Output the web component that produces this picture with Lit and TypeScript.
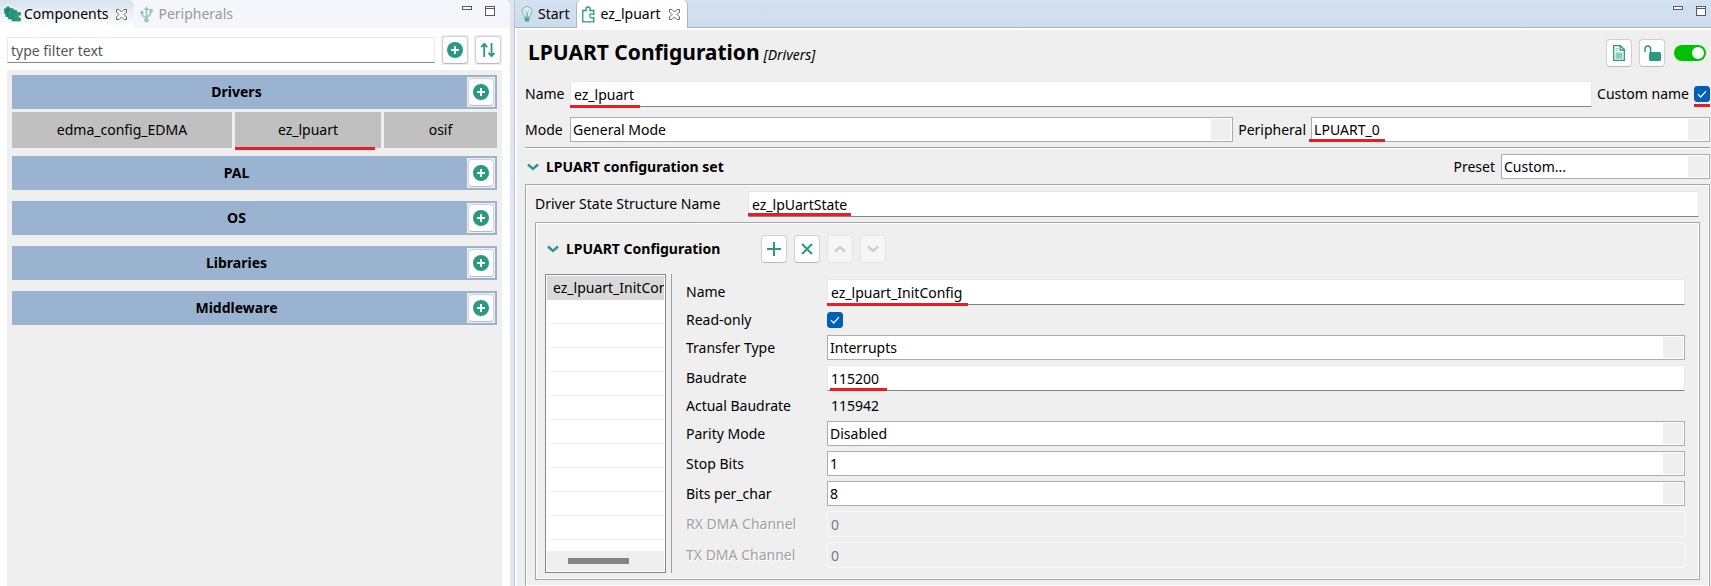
import { LitElement, html, css } from "lit";
import { customElement, state } from "lit/decorators.js";

const plusDisc = html`<svg width="16" height="16" viewBox="0 0 16 16"><circle cx="8" cy="8" r="8" fill="#2a9980"/><path d="M8 4V12M4 8H12" stroke="#fff" stroke-width="2"/></svg>`;
const sortArrows = html`<svg width="16" height="16" viewBox="0 0 16 16" fill="none" stroke="#2a9980" stroke-width="1.800"><path d="M4.200 15V2M1.200 5.200L4.200 1.800L7.200 5.200M11.500 1V14M8.500 10.800L11.500 14.200L14.500 10.800"/></svg>`;
const closeGlyph = html`<svg width="11" height="11" viewBox="0 0 11 11"><path d="M.5.5H3L5.500 3L8 .5H10.500V3L8 5.500L10.500 8V10.500H8L5.500 8L3 10.500H.5V8L3 5.500L.5 3Z" fill="#fff" stroke="#666" stroke-width="1"/></svg>`;
const minimise = html`<svg width="10" height="4" viewBox="0 0 10 4"><rect x=".5" y=".5" width="9" height="3" fill="#fff" stroke="#5a5a5a"/></svg>`;
const maximise = html`<svg width="10" height="10" viewBox="0 0 10 10"><rect x=".5" y=".5" width="9" height="9" fill="#fff" stroke="#5a5a5a"/><path d="M0 2.500H10" stroke="#5a5a5a"/></svg>`;
const componentsIcon = html`<svg width="17" height="16" viewBox="0 0 17 16"><path d="M0 2.500h2Q2 .5 4 .5T6 2.500h2V11H1.500V8.500Q0 8 .3 6.500Z" fill="#1f8a71"/><path d="M4 4.500h2Q6 2.500 8 2.500T10 4.500h2.500V13H4.500Z" fill="#2a9980" stroke="#1b7c66" stroke-width=".6"/><path d="M8 6.500h2Q10 4.800 11.500 4.800T13 6.500H16.500V9.200Q14.300 8.600 14.300 10.500T16.500 12V15H8Z" fill="#2a9980" stroke="#1b7c66" stroke-width=".6"/></svg>`;
const usbIcon = html`<svg width="13" height="17" viewBox="0 0 13 17" fill="none" stroke="#8fc9bb" stroke-width="1.500"><path d="M6.500 14V3M6.500 12Q2 10.500 2 7M6.500 11Q11 9.500 11 5"/><path d="M3.800 4L6.500 .5L9.200 4Z" fill="#8fc9bb" stroke="none"/><circle cx="6.500" cy="14.300" r="2.300" fill="#8fc9bb" stroke="none"/><circle cx="2" cy="6.500" r="1.700" fill="#8fc9bb" stroke="none"/><rect x="9.300" y="3" width="3.400" height="3.400" fill="#8fc9bb" stroke="none"/></svg>`;
const bulbIcon = html`<svg width="12" height="16" viewBox="0 0 12 16" fill="none" stroke="#6fb8ae"><path d="M3.500 11Q3.500 9.500 2 8.200A4.900 4.900 0 1 1 10 8.200Q8.500 9.500 8.500 11Z" fill="#dcefec"/><path d="M4 4.500L5.500 7V11M8 4.500L6.500 7V11" stroke-width=".8"/><path d="M3.500 12.500H8.500M4 14.500H8" stroke-width="2" stroke="#4aa394"/></svg>`;
const puzzleIcon = html`<svg width="13" height="17" viewBox="0 0 13 17" fill="none" stroke="#2a9980" stroke-width="1.300"><path d="M.8 4.500H4.300Q3.200 1 6 1T7.800 4.500H11.800V8.300Q7.800 6.800 7.800 9.800T11.800 11.600V15.800H.8Z"/></svg>`;
const fileIcon = html`<svg width="12" height="16" viewBox="0 0 12 16"><path d="M.7.700H7.500L11.300 4.500V15.300H.7Z" fill="#fff" stroke="#2a9980" stroke-width="1.300"/><path d="M7.200.7V5H11.300" fill="none" stroke="#2a9980" stroke-width="1.300"/><path d="M2.500 3.500H5.500M2.500 5.500H5.500" stroke="#8fc9bb" stroke-width="1.200"/><rect x="2.500" y="7.500" width="7" height="6.300" fill="#8fc9bb"/></svg>`;
const lockIcon = html`<svg width="17" height="17" viewBox="0 0 17 17"><rect x="5" y="7" width="12" height="9" rx="1.500" fill="#2a9980"/><path d="M1 7V4Q1 1 3.800 1T6.600 4V8" fill="none" stroke="#2a9980" stroke-width="1.500"/></svg>`;
const chevronDown = html`<svg width="12" height="8" viewBox="0 0 12 8"><path d="M1 1.500L6 6L11 1.500" fill="none" stroke="currentColor" stroke-width="2.400"/></svg>`;
const chevronUp = html`<svg width="12" height="8" viewBox="0 0 12 8"><path d="M1 6.500L6 2L11 6.500" fill="none" stroke="currentColor" stroke-width="2.400"/></svg>`;
const addIcon = html`<svg width="14" height="14" viewBox="0 0 14 14"><path d="M7 0V14M0 7H14" stroke="#2a9980" stroke-width="2"/></svg>`;
const removeIcon = html`<svg width="12" height="12" viewBox="0 0 12 12"><path d="M1 1L11 11M11 1L1 11" stroke="#2a9980" stroke-width="2"/></svg>`;
const tick = html`<svg class="tick" width="10" height="8" viewBox="0 0 10 8"><path d="M1 4.200L3.700 7L9 1.200" fill="none" stroke="#fff" stroke-width="1.200"/></svg>`;

interface Field {
  id: string;
  label: string;
  kind: "text" | "select" | "check" | "static" | "disabled";
  value?: string;
  mark?: string;
}

const FIELDS: Field[] = [
  { id: "cfg-name", label: "Name", kind: "text", value: "ez_lpuart_InitConfig", mark: "mark-wide" },
  { id: "cfg-ro", label: "Read-only", kind: "check" },
  { id: "cfg-transfer", label: "Transfer Type", kind: "select", value: "Interrupts" },
  { id: "cfg-baud", label: "Baudrate", kind: "text", value: "115200", mark: "mark-short" },
  { id: "cfg-actual", label: "Actual Baudrate", kind: "static", value: "115942" },
  { id: "cfg-parity", label: "Parity Mode", kind: "select", value: "Disabled" },
  { id: "cfg-stop", label: "Stop Bits", kind: "select", value: "1" },
  { id: "cfg-bits", label: "Bits per_char", kind: "select", value: "8" },
  { id: "cfg-rx", label: "RX DMA Channel", kind: "disabled", value: "0" },
  { id: "cfg-tx", label: "TX DMA Channel", kind: "disabled", value: "0" },
];

@customElement("app-root")
export class AppRoot extends LitElement {
  @state() private enabled = true;

  static styles = css`
    :host { display: block; height: 100vh; overflow: hidden; background: #dfe5f5; color: #000;
      font: 14px/20px "Noto Sans", "Open Sans", sans-serif; }
    * { box-sizing: border-box; }
    svg { display: block; flex: none; }
    button, input, select { font: inherit; color: inherit; margin: 0; }
    button { cursor: pointer; }
    h1, h2, h3, ul { margin: 0; padding: 0; font-size: inherit; list-style: none; }

    .shell { display: grid; grid-template-columns: 510px minmax(0, 1fr); gap: 4px; height: 100%; }
    .side { background: #fff; display: flex; flex-direction: column; border-top-right-radius: 6px; overflow: hidden; }
    .tabs { display: flex; height: 28px; flex: none; background: #f4f6fb; }
    .tab { display: flex; align-items: center; gap: 5px; border: 0; background: none; padding: 0 7px 0 6px; white-space: nowrap; }
    .side .tab { padding: 0 7px 0 4px; gap: 3px; }
    .side .tab.active { background: linear-gradient(#d6e3ef, #fff); border-top-right-radius: 6px; }
    .tab .close { margin-left: 5px; }
    .tab.dim { color: #999; }
    .side .tab.dim { gap: 5px; padding-left: 6px; }
    .winbtns { margin-left: auto; display: flex; gap: 13px; align-items: flex-start; padding: 6px 15px 0 0; }
    .winbtns button { border: 0; background: none; padding: 0; }

    .filter { display: flex; align-items: center; gap: 5px; padding: 7px 8px 5px 7px; }
    .filter .text { flex: 1; min-width: 0; margin-right: 1px; }
    .filter .text::placeholder { color: #555; opacity: 1; }
    .frame { background: #efefef; padding: 1px; flex: none; }
    .icon { width: 26px; height: 28px; display: grid; place-items: center; padding: 0; flex: none;
      background: #fdfdfd; border: 1px solid #d0d0d0; border-bottom-color: #b9b9b9; border-radius: 4px; }
    .icon:disabled { background: #f6f6f6; border-color: #e5e5e5; color: #ccc; }
    .tree { flex: 1; margin: 0 8px 0 7px; padding: 5px; background: #efefef; display: flex; flex-direction: column; gap: 11px; }
    .bar { height: 34px; display: flex; align-items: center; padding-right: 2px; background: #99b3d1; font-weight: 700; }
    .bar span { flex: 1; text-align: center; padding-right: 6px; }
    .items { display: grid; grid-template-columns: 220fr 146fr 113fr; gap: 3px; margin: 3px 0 -3px; }
    .items button { position: relative; height: 36px; border: 0; background: #c0c0c0; }

    .editor { display: flex; flex-direction: column; min-width: 0; background: #fff; border-left: 1px solid #c3c3c3; }
    .editor .tabs { background: linear-gradient(#d4e2f1, #cbdcec); border-bottom: 1px solid #a9b6cc; }
    .editor .tab.active { background: #fff; border: solid #a9b6cc; border-width: 0 1px; height: 28px; border-radius: 5px 5px 0 0; padding: 0 7px 0 5px; }
    .editor .tab.active .close { margin-left: 3px; }
    .editor .winbtns { padding-right: 5px; }
    .body { flex: 1; min-height: 0; margin: 2px 0 0 2px; padding: 9px 1px 0 8px; background: #efefef; }
    .title { display: flex; align-items: center; gap: 7px; height: 28px; padding: 0 4px 0 3px; }
    h1 { display: flex; align-items: baseline; gap: 4px; font-size: 21px; line-height: 28px; flex: none; }
    h1 small { font-size: 14px; font-weight: 400; font-style: italic; }
    .spacer { flex: 1; }
    .toggle { width: 32px; height: 16px; border-radius: 8px; border: 0; background: #00c000; padding: 2px; display: flex; justify-content: flex-end; margin-left: 2px; }
    .toggle::after { content: ""; width: 12px; height: 12px; border-radius: 50%; background: #fff; }
    .toggle.off { justify-content: flex-start; background: #999; }

    .row { display: flex; align-items: center; }
    .row > .lead { width: 45px; flex: none; }
    .row > .mid { padding: 0 5px; flex: none; }
    .row.name { margin-top: 14px; }
    .row.mode { margin-top: 10px; padding-bottom: 5px; border-bottom: 1px solid #a0a0a0; box-shadow: 0 1px #fff; }
    .grow { flex: 1; min-width: 0; }
    .g665 { flex: 665 1 0; min-width: 0; }
    .g400 { flex: 400 1 0; min-width: 0; }
    .field { position: relative; display: flex; }
    .text { width: 100%; height: 26px; padding: 0 3px; border: 1px solid #e8e8e8; border-bottom-color: #858585; background: #fff; border-radius: 1px; outline: 0; }
    .text:disabled { background: #efefef; border-color: #f8f8f8; color: #777; }
    .select { width: 100%; height: 25px; padding: 0 24px 0 2px; appearance: none; border: 1px solid #acacb0; border-radius: 0; outline: 0;
      background: linear-gradient(#efefef, #efefef) right 1px center / 20px 21px no-repeat #fff; }
    .check { position: relative; width: 16px; height: 16px; flex: none; display: block; }
    .check input { appearance: none; width: 16px; height: 16px; border-radius: 3px; border: 1px solid #888; background: #fff; display: block; }
    .check input:checked { background: #005fb8; border-color: #005fb8; }
    .tick { position: absolute; left: 3px; top: 4px; pointer-events: none; }

    .mark::after { content: ""; position: absolute; height: 3px; left: 0; bottom: -1px; width: 70px; background: #ed1c24; pointer-events: none; }
    .mark-item::after { width: 140px; bottom: -2px; }
    .mark-check::after { width: 16px; bottom: -5px; }
    .mark-periph::after { left: -2px; bottom: 0; width: 76px; }
    .mark-state::after { width: 103px; bottom: 1px; }
    .mark-wide::after { width: 141px; }
    .mark-short::after { left: 3px; width: 57px; bottom: 0; }

    .sec { display: flex; align-items: center; }
    .twist { display: flex; align-items: center; gap: 7px; border: 0; background: none; padding: 0 2px; font-weight: 700; }
    .twist svg { color: #2a9980; }
    .sec.outer { margin-top: 6px; justify-content: space-between; }
    .preset { display: flex; align-items: center; gap: 6px; }
    .preset .field { width: 209px; }
    .group { border: 1px solid #a6a6aa; box-shadow: inset 0 0 0 1px #fff; }
    .group.outer { margin-top: 5px; padding: 6px 9px; }
    .driver label { width: 213px; flex: none; }
    .driver .grow { margin-right: 1px; }
    .group.inner { margin-top: 5px; padding: 12px 14px 6px 9px; }
    .sec.inner { gap: 7px; margin-bottom: 11px; }
    .sec.inner .twist { width: 209px; }
    .split { display: grid; grid-template-columns: 121px 1px minmax(0, 1fr); }
    .split { column-gap: 5px; }
    .rule { background: #a0a0a0; }
    .list { border: 1px solid #828790; padding: 1px; background: #fff; display: flex; flex-direction: column; overflow: hidden; }
    .rows { flex: 1; overflow: hidden; background: repeating-linear-gradient(#fff 0 23px, #efefef 23px 24px); }
    .rows button { display: block; width: 100%; height: 24px; border: 0; padding: 0 0 0 6px; background: #d9d9d9; text-align: left; white-space: nowrap; overflow: hidden; }
    .scroll { height: 20px; padding: 7px 35px 7px 21px; background: #efefef; }
    .thumb { height: 6px; background: #858585; }
    .form { display: grid; grid-template-columns: 141px minmax(0, 1fr); row-gap: 5px; align-items: center; padding: 5px 0 5px 9px; }
    .form output { padding-left: 4px; }
    .form .off { color: #a0a0a0; text-shadow: 1px 1px #fff; }
    .form .check { margin: 2px 0; }
  `;

  private select(id: string, value: string) {
    return html`<select class="select" id=${id}><option>${value}</option></select>`;
  }

  private field(f: Field) {
    const label = html`<label for=${f.id} class=${f.kind === "disabled" ? "off" : ""}>${f.label}</label>`;
    switch (f.kind) {
      case "check":
        return html`${label}<span class="check"><input type="checkbox" id=${f.id} checked />${tick}</span>`;
      case "static":
        return html`${label}<output id=${f.id}>${f.value}</output>`;
      case "select":
        return html`${label}<div class="field">${this.select(f.id, f.value!)}</div>`;
      default:
        return html`${label}<div class="field ${f.mark ? `mark ${f.mark}` : ""}">
          <input class="text" id=${f.id} .value=${f.value ?? ""} ?disabled=${f.kind === "disabled"} /></div>`;
    }
  }

  private bar(name: string) {
    return html`<div class="bar"><span>${name}</span><div class="frame"><button class="icon" aria-label="Add to ${name}">${plusDisc}</button></div></div>`;
  }

  private windowButtons() {
    return html`<div class="winbtns"><button aria-label="Minimize">${minimise}</button><button aria-label="Maximize">${maximise}</button></div>`;
  }

  render() {
    return html`<div class="shell">
      <aside class="side">
        <div class="tabs">
          <button class="tab active">${componentsIcon}<span>Components</span><span class="close">${closeGlyph}</span></button>
          <button class="tab dim">${usbIcon}<span>Peripherals</span></button>
          ${this.windowButtons()}
        </div>
        <div class="filter">
          <input class="text" aria-label="Filter" placeholder="type filter text" />
          <div class="frame"><button class="icon" aria-label="Add component">${plusDisc}</button></div>
          <div class="frame"><button class="icon" aria-label="Sort">${sortArrows}</button></div>
        </div>
        <div class="tree">
          <div>
            ${this.bar("Drivers")}
            <div class="items">
              <button>edma_config_EDMA</button>
              <button class="mark mark-item">ez_lpuart</button>
              <button>osif</button>
            </div>
          </div>
          ${["PAL", "OS", "Libraries", "Middleware"].map((n) => this.bar(n))}
        </div>
      </aside>
      <main class="editor">
        <div class="tabs">
          <button class="tab">${bulbIcon}<span>Start</span></button>
          <button class="tab active">${puzzleIcon}<span>ez_lpuart</span><span class="close">${closeGlyph}</span></button>
          ${this.windowButtons()}
        </div>
        <div class="body">
          <div class="title">
            <h1>LPUART Configuration <small>[Drivers]</small></h1>
            <span class="spacer"></span>
            <button class="icon" aria-label="Documentation">${fileIcon}</button>
            <button class="icon" aria-label="Unlock">${lockIcon}</button>
            <button class="toggle ${this.enabled ? "" : "off"}" role="switch" aria-label="Enabled" aria-checked=${this.enabled}
              @click=${() => (this.enabled = !this.enabled)}></button>
          </div>
          <div class="row name">
            <label class="lead" for="name">Name</label>
            <div class="field grow mark"><input class="text" id="name" value="ez_lpuart" /></div>
            <label class="mid" for="custom">Custom name</label>
            <span class="check mark mark-check"><input type="checkbox" id="custom" checked />${tick}</span>
          </div>
          <div class="row mode">
            <label class="lead" for="mode">Mode</label>
            <div class="field g665">${this.select("mode", "General Mode")}</div>
            <label class="mid" for="peripheral">Peripheral</label>
            <div class="field g400 mark mark-periph">${this.select("peripheral", "LPUART_0")}</div>
          </div>
          <div class="sec outer">
            <h2><button class="twist">${chevronDown}LPUART configuration set</button></h2>
            <div class="preset"><label for="preset">Preset</label><div class="field">${this.select("preset", "Custom...")}</div></div>
          </div>
          <section class="group outer">
            <div class="row driver">
              <label for="state">Driver State Structure Name</label>
              <div class="field grow mark mark-state"><input class="text" id="state" value="ez_lpUartState" /></div>
            </div>
            <section class="group inner">
              <div class="sec inner">
                <h3><button class="twist">${chevronDown}LPUART Configuration</button></h3>
                <button class="icon" aria-label="Add">${addIcon}</button>
                <button class="icon" aria-label="Remove">${removeIcon}</button>
                <button class="icon" aria-label="Move up" disabled>${chevronUp}</button>
                <button class="icon" aria-label="Move down" disabled>${chevronDown}</button>
              </div>
              <div class="split">
                <div class="list">
                  <div class="rows"><button>ez_lpuart_InitConfig</button></div>
                  <div class="scroll"><div class="thumb"></div></div>
                </div>
                <div class="rule"></div>
                <div class="form">${FIELDS.map((f) => this.field(f))}</div>
              </div>
            </section>
          </section>
        </div>
      </main>
    </div>`;
  }
}
